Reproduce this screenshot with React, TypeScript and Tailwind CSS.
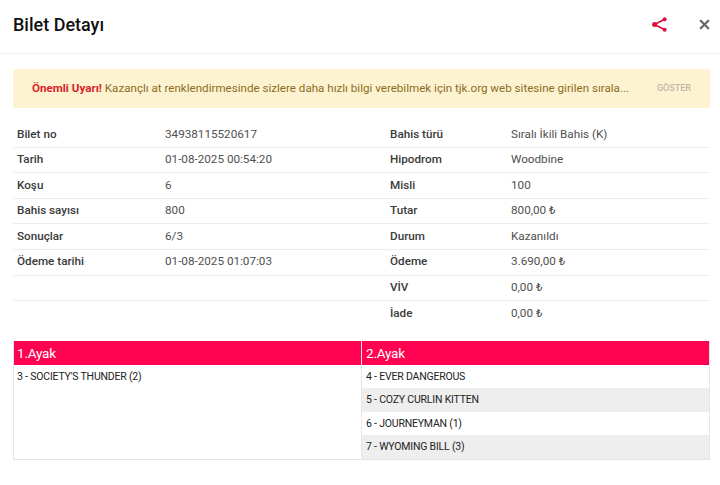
import { X } from "lucide-react";

const LEFT = [
  ["Bilet no", "34938115520617"],
  ["Tarih", "01-08-2025 00:54:20"],
  ["Koşu", "6"],
  ["Bahis sayısı", "800"],
  ["Sonuçlar", "6/3"],
  ["Ödeme tarihi", "01-08-2025 01:07:03"],
  ["", ""],
];

const RIGHT = [
  ["Bahis türü", "Sıralı İkili Bahis (K)"],
  ["Hipodrom", "Woodbine"],
  ["Misli", "100"],
  ["Tutar", "800,00 ₺"],
  ["Durum", "Kazanıldı"],
  ["Ödeme", "3.690,00 ₺"],
  ["VİV", "0,00 ₺"],
  ["İade", "0,00 ₺"],
];

const LEG_2 = [
  "4 - EVER DANGEROUS",
  "5 - COZY CURLIN KITTEN",
  "6 - JOURNEYMAN (1)",
  "7 - WYOMING BILL (3)",
];

function InfoRow({ label, value, labelWidth, last }: { label: string; value: string; labelWidth: string; last?: boolean }) {
  return (
    <div className={`flex h-[25.6px] items-center px-1 text-[11.7px] ${last ? "" : "border-b border-[#eeeeee]"}`}>
      <div className={`${labelWidth} font-medium text-[#3a3a3a]`}>{label}</div>
      <div className="text-[#505050]">{value}</div>
    </div>
  );
}

export default function App() {
  return (
    <div className="h-[485px] w-[720px] overflow-hidden bg-white font-['Roboto',sans-serif]">
      <header className="flex h-[54px] items-center justify-between border-b border-[#f0f0f0] pb-[4px] pl-[13px] pr-[8px]">
        <h1 className="text-[18px] font-medium text-[#111111]">Bilet Detayı</h1>
        <div className="flex items-center gap-[30px]">
          <svg width="15" height="15" viewBox="0 0 15 15" className="text-[#dc0f3c]">
            <path d="M12.6 2.2 L2.6 7.5 L12.6 12.8" fill="none" stroke="currentColor" strokeWidth="1.7" />
            <circle cx="12.6" cy="2.2" r="2" fill="currentColor" />
            <circle cx="2.6" cy="7.5" r="2.5" fill="currentColor" />
            <circle cx="12.6" cy="12.8" r="2" fill="currentColor" />
          </svg>
          <X size={15} className="text-[#666666]" strokeWidth={3.6} />
        </div>
      </header>

      <div className="pl-[13px] pr-[10px] pt-[15px]">
        <div className="flex h-[39px] items-center justify-between rounded-[3px] bg-[#fdf3d0] px-[19px] text-[11.6px]">
          <p className="text-[#8a6d1f]">
            <span className="font-bold text-[#d8232a]">Önemli Uyarı!</span> Kazançlı at renklendirmesinde sizlere daha hızlı bilgi verebilmek için tjk.org web sitesine girilen sırala...
          </p>
          <span className="text-[9px] font-medium text-[#bdb9a6]">GÖSTER</span>
        </div>

        <div className="mt-[14px] grid grid-cols-[373px_324px]">
          <div>
            {LEFT.map(([label, value]) => (
              <InfoRow key={label || "empty"} label={label} value={value} labelWidth="w-[148px]" />
            ))}
          </div>
          <div>
            {RIGHT.map(([label, value], i) => (
              <InfoRow key={label} label={label} value={value} labelWidth="w-[121px]" last={i === RIGHT.length - 1} />
            ))}
          </div>
        </div>

        <div className="mt-[14px] grid w-[697px] grid-cols-[348px_1fr] border-b border-l border-[#e6e6e6] text-[10.5px] tracking-[-0.2px] text-[#222222]">
          <div className="border-r border-[#e6e6e6]">
            <div className="flex h-[24px] items-center bg-[#ff0251] px-[3px] text-[13.5px] text-white">1.Ayak</div>
            <div className="flex h-[23.5px] items-center px-[3px]">3 - SOCIETY'S THUNDER (2)</div>
          </div>
          <div className="border-r border-[#e6e6e6]">
            <div className="flex h-[24px] items-center bg-[#ff0251] px-[4px] text-[13.5px] text-white">2.Ayak</div>
            {LEG_2.map((horse, i) => (
              <div key={horse} className={`flex h-[23.5px] items-center px-[4px] ${i % 2 === 1 ? "bg-[#eeeeee]" : ""}`}>
                {horse}
              </div>
            ))}
          </div>
        </div>
      </div>
    </div>
  );
}
